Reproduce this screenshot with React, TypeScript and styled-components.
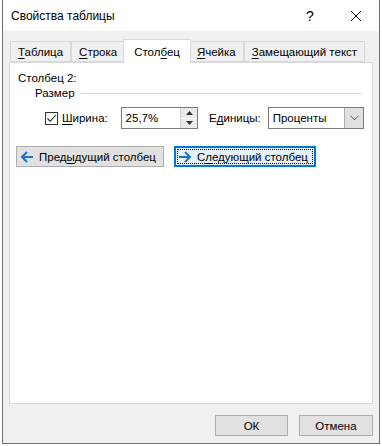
import styled, { createGlobalStyle } from 'styled-components';

const GlobalStyle = createGlobalStyle`
  html, body { margin: 0; padding: 0; background: #fff; }
  body { font-family: "Liberation Sans", Arial, sans-serif; font-size: 11.5px; color: #000; }
`;

const Window = styled.div`
  margin: 0 2px 2px 2px;
  width: 378px;
  height: 444px;
  box-sizing: border-box;
  border: 1px solid #6e6e6e;
  border-top: none;
  background: #f0f0f0;
  display: flex;
  flex-direction: column;
`;

const TitleBar = styled.div`
  height: 31px;
  background: #fff;
  display: flex;
  align-items: center;
  padding-left: 8px;
  font-size: 12px;
`;

const Title = styled.div`
  flex: 1;
`;

const TitleBtn = styled.div`
  width: 46px;
  height: 31px;
  display: flex;
  align-items: center;
  justify-content: center;
  font-size: 14px;
`;

const Body = styled.div`
  flex: 1;
  display: flex;
  flex-direction: column;
  padding: 8px 6px 0 6px;
`;

const Tabs = styled.div`
  display: flex;
  align-items: flex-end;
  height: 23px;
  padding-left: 1px;
  position: relative;
  z-index: 1;
`;

const Tab = styled.div<{ $active?: boolean }>`
  box-sizing: border-box;
  height: ${(p) => (p.$active ? '24px' : '21px')};
  margin: ${(p) => (p.$active ? '0 -2px -1px -2px' : '0')};
  padding: 0 ${(p) => (p.$active ? '10px' : '7px')};
  display: flex;
  align-items: center;
  background: ${(p) => (p.$active ? '#fff' : '#f0f0f0')};
  border: 1px solid #d9d9d9;
  border-bottom: ${(p) => (p.$active ? 'none' : '1px solid #d9d9d9')};
  & + & { border-left: ${(p) => (p.$active ? '1px solid #d9d9d9' : 'none')}; }
  position: relative;
  z-index: ${(p) => (p.$active ? 2 : 1)};
  white-space: nowrap;
`;

const Panel = styled.div`
  height: 342px;
  box-sizing: border-box;
  background: #fff;
  border: 1px solid #d9d9d9;
  padding: 7px 8px 0 8px;
`;

const Label = styled.div`
  line-height: 16px;
`;

const GroupHead = styled.div`
  display: flex;
  align-items: center;
  gap: 6px;
  margin: -1px 0 0 17px;
  line-height: 16px;
  &::after {
    content: '';
    flex: 1;
    border-top: 1px solid #dcdcdc;
    margin-right: 2px;
  }
`;

const Row = styled.div`
  display: flex;
  align-items: center;
  margin: 6px 0 0 27px;
  height: 22px;
`;

const Check = styled.div`
  width: 13px;
  height: 13px;
  box-sizing: border-box;
  border: 1px solid #333;
  display: flex;
  align-items: center;
  justify-content: center;
  margin-right: 4px;
`;

const FieldLabel = styled.span<{ $gap?: number }>`
  width: 59px;
  margin-left: ${(p) => p.$gap ?? 0}px;
`;

const Field = styled.div<{ $w: number }>`
  width: ${(p) => p.$w}px;
  height: 22px;
  box-sizing: border-box;
  border: 1px solid #7a7a7a;
  display: flex;
  align-items: center;
  background: #fff;
`;

const FieldText = styled.div`
  flex: 1;
  padding-left: 4px;
`;

const Spin = styled.div`
  width: 16px;
  height: 20px;
  display: flex;
  flex-direction: column;
  border-left: 1px solid #d0d0d0;
`;

const SpinHalf = styled.div`
  flex: 1;
  background: #eaeaea;
  display: flex;
  align-items: center;
  justify-content: center;
  & + & { border-top: 1px solid #fff; }
`;

const DropBtn = styled.div`
  width: 18px;
  height: 20px;
  background: #e1e1e1;
  border-left: 1px solid #adadad;
  display: flex;
  align-items: center;
  justify-content: center;
`;

const NavRow = styled.div`
  display: flex;
  gap: 10px;
  margin-top: 17px;
  margin-left: -2px;
`;

const Button = styled.div<{ $focus?: boolean; $w?: number }>`
  height: 21px;
  box-sizing: border-box;
  ${(p) => (p.$w ? `width: ${p.$w}px; justify-content: center;` : 'padding: 0 7px 0 3px;')}
  background: ${(p) => (p.$focus ? '#e5f1fb' : '#e1e1e1')};
  border: 1px solid ${(p) => (p.$focus ? '#0078d7' : '#adadad')};
  box-shadow: ${(p) => (p.$focus ? 'inset 0 0 0 1px #0078d7' : 'none')};
  display: flex;
  align-items: center;
  gap: 5px;
  position: relative;
  white-space: nowrap;
`;

const FocusRing = styled.span`
  position: absolute;
  inset: 2px;
  border: 1px dotted #000;
  pointer-events: none;
`;

const Footer = styled.div`
  height: 39px;
  display: flex;
  justify-content: flex-end;
  align-items: center;
  gap: 11px;
  padding-top: 2px;
`;

const U = styled.span`
  text-decoration: underline;
  text-underline-offset: 2px;
`;

const Arrow = ({ dir }: { dir: 'left' | 'right' }) => (
  <svg width="14" height="12" viewBox="0 0 14 12">
    <g
      transform={dir === 'right' ? 'translate(14,0) scale(-1,1)' : undefined}
      fill="none"
      stroke="#1e73c8"
      strokeWidth="2"
    >
      <path d="M2 6 H13" />
      <path d="M7 1 L2 6 L7 11" />
    </g>
  </svg>
);

export default function App() {
  return (
    <>
      <GlobalStyle />
      <Window>
        <TitleBar>
          <Title>Свойства таблицы</Title>
          <TitleBtn>?</TitleBtn>
          <TitleBtn>
            <svg width="12" height="12" viewBox="0 0 12 12">
              <path d="M1 1 L11 11 M11 1 L1 11" stroke="#000" strokeWidth="1" />
            </svg>
          </TitleBtn>
        </TitleBar>
        <Body>
          <Tabs>
            <Tab><span><U>Т</U>аблица</span></Tab>
            <Tab><span><U>С</U>трока</span></Tab>
            <Tab $active><span>Стол<U>б</U>ец</span></Tab>
            <Tab><span><U>Я</U>чейка</span></Tab>
            <Tab><span><U>З</U>амещающий текст</span></Tab>
          </Tabs>
          <Panel>
            <Label>Столбец 2:</Label>
            <GroupHead>Размер</GroupHead>
            <Row>
              <Check>
                <svg width="11" height="11" viewBox="0 0 11 11">
                  <path d="M1.5 5.5 L4.2 8.3 L9.8 2" fill="none" stroke="#222" strokeWidth="1.1" />
                </svg>
              </Check>
              <FieldLabel><U>Ш</U>ирина:</FieldLabel>
              <Field $w={78}>
                <FieldText>25,7%</FieldText>
                <Spin>
                  <SpinHalf>
                    <svg width="7" height="4" viewBox="0 0 7 4"><path d="M0 4 L3.5 0 L7 4Z" fill="#333" /></svg>
                  </SpinHalf>
                  <SpinHalf>
                    <svg width="7" height="4" viewBox="0 0 7 4"><path d="M0 0 L3.5 4 L7 0Z" fill="#333" /></svg>
                  </SpinHalf>
                </Spin>
              </Field>
              <FieldLabel $gap={11}>Е<U>д</U>иницы:</FieldLabel>
              <Field $w={97}>
                <FieldText>Проценты</FieldText>
                <DropBtn>
                  <svg width="9" height="6" viewBox="0 0 9 6">
                    <path d="M0.5 0.8 L4.5 4.8 L8.5 0.8" fill="none" stroke="#555" strokeWidth="1" />
                  </svg>
                </DropBtn>
              </Field>
            </Row>
            <NavRow>
              <Button>
                <Arrow dir="left" />
                <span>Пред<U>ы</U>дущий столбец</span>
              </Button>
              <Button $focus>
                <Arrow dir="right" />
                <span>С<U>л</U>едующий столбец</span>
                <FocusRing />
              </Button>
            </NavRow>
          </Panel>
          <Footer>
            <Button $w={73}>ОК</Button>
            <Button $w={74}>Отмена</Button>
          </Footer>
        </Body>
      </Window>
    </>
  );
}
